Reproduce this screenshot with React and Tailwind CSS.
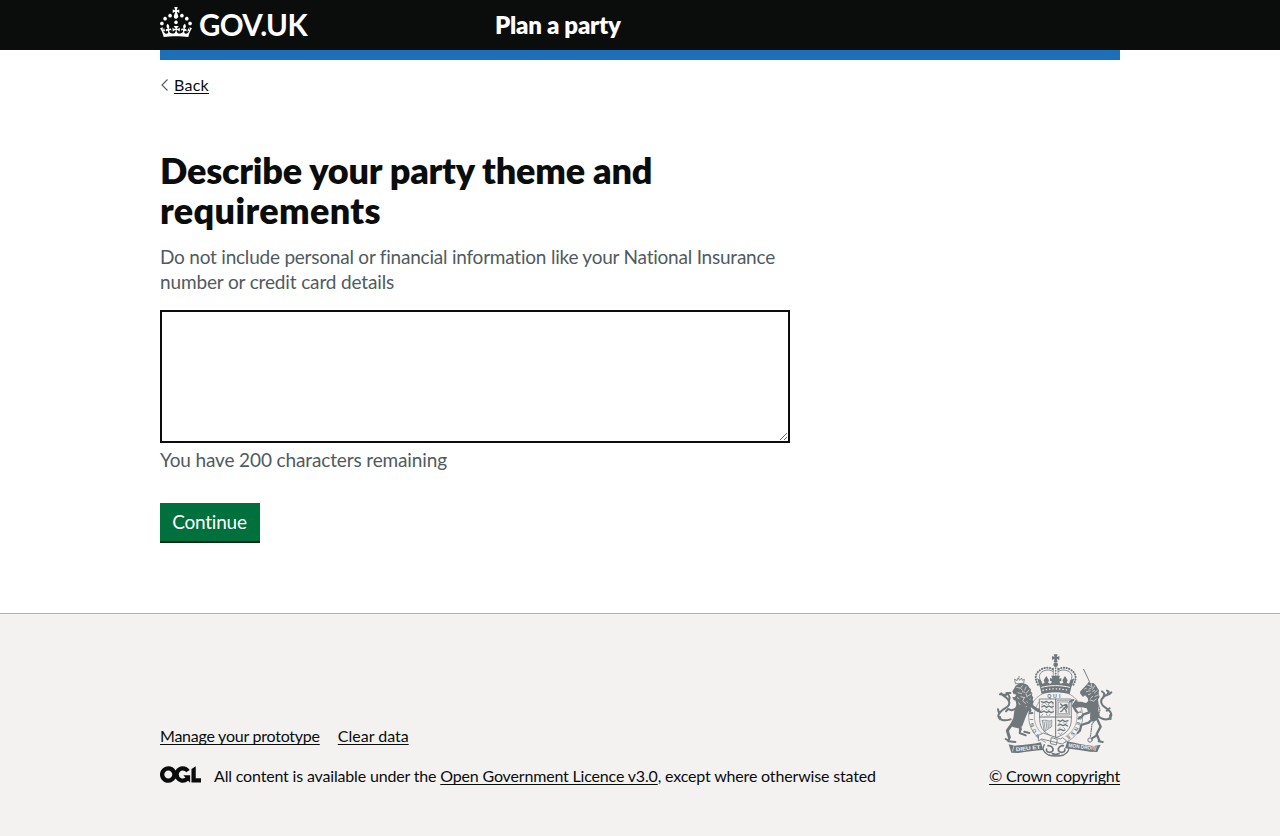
import React from 'react';

function Crown() {
  return (
    <svg className="block h-[30px] w-8 shrink-0" viewBox="0 0 32 30" fill="currentColor" aria-hidden="true">
      <path d="M22.6 10.4c-1 .4-2-.1-2.4-1-.4-.9.1-2 1-2.4.9-.4 2 .1 2.4 1s-.1 2-1 2.4m-5.9 6.7c-.9.4-2-.1-2.4-1-.4-.9.1-2 1-2.4.9-.4 2 .1 2.4 1s-.1 2-1 2.4m10.8-3.7c-1 .4-2-.1-2.4-1-.4-.9.1-2 1-2.4.9-.4 2 .1 2.4 1s0 2-1 2.4m3.3 4.8c-1 .4-2-.1-2.4-1-.4-.9.1-2 1-2.4.9-.4 2 .1 2.4 1s-.1 2-1 2.4M17 4.7l2.3 1.2V2.5l-2.3.7-.2-.2.9-3h-3.4l.9 3-.2.2c-.1.1-2.3-.7-2.3-.7v3.4L15 4.7c.1.1.1.2.2.2l-1.3 4c-.1.2-.1.4-.1.6 0 1.1.8 2 1.9 2.2h.7c1-.2 1.9-1.1 1.9-2.1 0-.2 0-.4-.1-.6l-1.3-4c-.1-.2 0-.2.1-.3m-7.6 5.7c.9.4 2-.1 2.4-1 .4-.9-.1-2-1-2.4-.9-.4-2 .1-2.4 1s0 2 1 2.4m-5 3c.9.4 2-.1 2.4-1 .4-.9-.1-2-1-2.4-.9-.4-2 .1-2.4 1s.1 2 1 2.4m-3.2 4.8c.9.4 2-.1 2.4-1 .4-.9-.1-2-1-2.4-.9-.4-2 .1-2.4 1s0 2 1 2.4m14.8 11c4.4 0 8.6.3 12.3.8 1.1-4.5 2.4-7 3.7-8.8l-2.5-.9c.2 1.3.3 1.9 0 2.7-.4-.4-.8-1.1-1.1-2.3l-1.2 4c.7-.5 1.3-.8 2-.9-1.1 2.5-2.6 3.1-3.5 3-1.1-.2-1.7-1.2-1.5-2.1.3-1.2 1.5-1.5 2.1-.1 1.1-2.3-.8-3-2-2.3 1.9-1.9 2.1-3.5.6-5.6-2.1 1.6-2.1 3.2-1.2 5.5-1.2-1.4-3.2-.6-2.5 1.6.9-1.4 2.1-.5 1.9.8-.2 1.1-1.7 2.1-3.5 1.9-2.7-.2-2.9-2.1-2.9-3.6.7-.1 1.9.5 2.9 1.9l.4-4.3c-1.1 1.1-2.1 1.4-3.2 1.4.4-1.2 2.1-3 2.1-3h-5.4s1.7 1.9 2.1 3c-1.1 0-2.1-.2-3.2-1.4l.4 4.3c1-1.4 2.2-2 2.9-1.9-.1 1.5-.2 3.4-2.9 3.6-1.9.2-3.4-.8-3.5-1.9-.2-1.3 1-2.2 1.9-.8.7-2.3-1.2-3-2.5-1.6.9-2.2.9-3.9-1.2-5.5-1.5 2-1.3 3.7.6 5.6-1.2-.7-3.1 0-2 2.3.6-1.4 1.8-1.1 2.1.1.2.9-.3 1.9-1.5 2.1-.9.2-2.4-.5-3.5-3 .6 0 1.2.3 2 .9l-1.2-4c-.3 1.1-.7 1.9-1.1 2.3-.3-.8-.2-1.4 0-2.7l-2.9.9C1.3 23 2.6 25.5 3.7 30c3.7-.5 7.9-.8 12.3-.8" />
    </svg>
  );
}

function RoyalArms() {
  return (
    <svg className="block h-[103px] w-[116px]" viewBox="51 40 348 309" fill="none" stroke="#6f777b" strokeLinecap="round" strokeLinejoin="round" aria-hidden="true">
      {/* crown */}
      <path fill="#6f777b" stroke="none" d="M221 41h12l-3 8 8-3v12l-8-4 3 10h-12l3-10-8 4V46l8 3z" />
      <circle cx="227" cy="72" r="7" fill="#6f777b" stroke="none" />
      <path strokeWidth="6" strokeDasharray="1 7" d="M174 132c-12-20-8-36 10-46 12-7 26-6 35 0M280 132c12-20 8-36-10-46-12-7-26-6-35 0" />
      <path strokeWidth="2.500" d="M183 122c-9-14-5-25 7-31 11-5 22-4 30 2M271 122c9-14 5-25-7-31-11-5-22-4-30 2" />
      <path strokeWidth="5" strokeDasharray="1 7" d="M227 82v26" />
      <path strokeWidth="2" d="M221 82c-2 12-2 20 0 28M233 82c2 12 2 20 0 28" />
      <path fill="#6f777b" stroke="none" d="M180 140l-9-27 11 5 5 11 7-3-3-7 8-13 8 13-3 7 8 3 4-6-6-3v-8l7 2-3-9h26l-3 9 7-2v8l-6 3 4 6 8-3-3-7 8-13 8 13-3 7 7 3 5-11 11-5-9 27-5 20c-26-7-62-7-84 0z" />
      <path stroke="#f3f2f1" strokeWidth="3" d="M185 140c25-7 59-7 84 0" />
      <path stroke="#f3f2f1" strokeWidth="4" strokeDasharray="1 9" d="M189 149c25-6 51-6 76 0" />
      {/* garter ring */}
      <path strokeWidth="2" d="M186 160c-23 12-40 37-40 67 0 38 22 65 51 78M268 160c23 12 40 37 40 67 0 38-22 65-51 78" />
      <path strokeWidth="1.6" d="M178 183c-10 12-15 26-15 44 0 26 13 47 33 60M276 183c10 12 15 26 15 44 0 26-13 47-33 60M186 160c24-9 58-9 82 0" />
      <g fill="#6f777b" stroke="none" fontFamily="'Liberation Sans', sans-serif" fontWeight="700" fontSize="16">
        <text x="202" y="172">Q</text>
        <text x="219" y="171">U</text>
        <text x="237" y="172">I</text>
      </g>
      <g fill="#6f777b" stroke="none" fontFamily="'Liberation Sans', sans-serif" fontWeight="700" fontSize="15">
        <text transform="translate(181 287) rotate(-133)">H</text>
        <text transform="translate(170 273) rotate(-120)">O</text>
        <text transform="translate(163 257) rotate(-106)">N</text>
        <text transform="translate(160 238) rotate(-96)">I</text>
        <text transform="translate(293 210) rotate(80)">Y</text>
        <text transform="translate(295 227) rotate(94)">P</text>
        <text transform="translate(292 243) rotate(107)">E</text>
        <text transform="translate(287 258) rotate(120)">N</text>
        <text transform="translate(278 272) rotate(133)">S</text>
        <text transform="translate(266 283) rotate(145)">E</text>
      </g>
      {/* shield */}
      <path strokeWidth="2.500" fill="#f3f2f1" d="M179 175h95v62c0 28-17 44-47 54-30-10-48-26-48-54z" />
      <path strokeWidth="3" d="M227 175v116M179 229h95" />
      <path strokeWidth="4" d="M184 183l8 3 7-4 8 5 7-4 6 4M185 199l7-4 8 5 7-4 7 4 6-3M184 215l8-4 8 5 7-4 7 4 6-3M234 239l7 3 7-4 7 5 9-3M234 254l7-3 8 4 7-3 7 4M234 269l8-3 8 4 5-2" />
      <path strokeWidth="2" d="M188 189l-3 4M197 188l3 4M207 190l-3 4M216 188l3 4M188 205l-3 4M198 204l3 4M208 206l-3 4M217 204l3 4M188 221l-3 4M199 221l3 4M210 221l-3 4M239 246l-2 3M249 245l3 3M260 246l-3 4M240 261l-3 3M251 261l3 3M236 278l5 3 5-4" />
      <path strokeWidth="1.8" d="M232 180h37v43h-37zM236 184h29v35h-29z" />
      <path strokeWidth="4" d="M242 190l6 6 7-4 3 6-7 5-4 7-5 3M251 203l6 3 2 8M247 198l-7 4M260 203l2-5-3-7" />
      <path strokeWidth="2" d="M187 240l6 33 22-15V238c-8 8-18-4-28 2zM192 243l4 26M198 242l3 23M204 243l1 19M210 243v17" />
      {/* lion */}
      <g fill="#6f777b" stroke="none">
        <path d="M103 143l4-8 9-5 10-2 9 1 8 4 5 8 5 5-1 6 5 6-1 7 4 5-2 7 3 8-7 12-10 16-8 19-9 24-13 7-16-4-6-10 8-17 3-22 6-18-2-12-6-2-4-8 8-1 4-7-9-3-3-7z" />
      </g>
      <path strokeWidth="2.500" d="M106 128l-2-13 7 5 3-8 5 7 6-7 2 7 6-3-2 11zM117 112v-5" />
      <path stroke="#f3f2f1" strokeWidth="2" d="M110 140l9 2M127 135l-6 8 6 5M138 139l-4 9M147 148l-7 8M114 156l11 3M153 160l-10 6M123 168l10 3M138 159l3 10M127 153l8 2M151 175l-8 5M128 181l9 7M147 193l-9 5M133 170l-3 8M141 183l5 5M116 186l4 6M112 171l5 3" />
      <path strokeWidth="9" d="M146 180l12 18 17 12M99 246l-17 24 6 20M118 246l3 20M144 192l6 18" />
      <path strokeWidth="6" d="M109 203l-14 6-11-4M84 205l-6 7M175 206l6 8M157 217l-8 1M88 292l-3 10 21 2M86 300l-9-5M121 266l-2 11 18 7M133 273l15 4" />
      <path strokeWidth="6" d="M92 236c-20 6-34 3-37-9-1-13 15-21 26-28 11-8 8-19-1-27-6-5-12-8-16-14M78 163l-18-2M87 178c4-8-1-16-8-21l12 0M61 236l-1-7M56 214l-2-8" />
      {/* unicorn */}
      <path strokeWidth="3" strokeDasharray="5 2" d="M311 86l17 36" />
      <g fill="#6f777b" stroke="none">
        <path d="M300 158l1-6 10-11 10-10 5-8 6 4 8 0 7 6 5 8 5 8-1 10 3 9-5 9 2 14-1 16 4 18-7 12-14 6-8-9 1-20-11-11-18-4-13 3-9-5-2-8 10-6 16 0 14 4 7-6-2-9-8-8-6 5z" />
      </g>
      <path stroke="#f3f2f1" strokeWidth="2" d="M314 145l5-2M323 133l9 4M334 129l2 12M344 135l-6 11M352 149l-9 8M355 163l-10 4M319 153l12-3M338 167l-6 6M349 175l-8 6M325 162l7-3M338 152l6-2M330 178l10 3M333 143l-6 2" />
      <path strokeWidth="7" d="M288 182l-9 13 9 16M322 196l6 19-17 6-8 9M342 231l-16 15-22 7-4 16M350 232l12 26-12 22 8 20" />
      <path strokeWidth="6" d="M289 211l4 5M300 230l-5 4M300 270l-7 7M356 302l12 2M350 284l-14 9M280 178l-10 5" />
      <path strokeWidth="6" d="M355 228c20 13 37 10 39-5 1-14-18-20-26-29-8-10-5-18 2-25 7-7 17-5 24-14M370 171l3-12-7-7M382 162l4-9-5-3M392 235l-2-11M380 210l9-7" />
      <path strokeWidth="3.500" strokeDasharray="3 4" d="M356 194l4 14-6 20-18 22-5 40" />
      <circle cx="330" cy="298" r="6.500" strokeWidth="3" />
      {/* garter buckle */}
      <path strokeWidth="2.500" fill="#f3f2f1" d="M176 284l14-7 51 18 7-4 12 10-13 9-62-15-9 5zM215 291l17 5-3 17-17-4z" />
      {/* motto scroll */}
      <path fill="#6f777b" stroke="none" d="M86 311l19 4c28-2 53-4 78-10l7 23c-28 2-50 5-75 9l-21-1zM262 302c29 7 54 12 80 14l20-4-10 22-22-1c-26-4-50-7-75-10z" />
      <path strokeWidth="4" d="M193 312c-7 12-4 22 12 31 12 4 34 4 46 0 16-9 19-19 12-31" />
      <path strokeWidth="5" d="M200 325c-4 8 10 14 18 6 4-10-4-16-14-16M254 325c4 8-10 14-18 6-4-10 4-16 14-16M217 339l10 3 10-3" />
      <path stroke="#f3f2f1" strokeWidth="2" d="M101 318l-3 13M349 318l-4 12" />
      <g fill="#f3f2f1" stroke="none" fontFamily="'Liberation Sans', sans-serif" fontWeight="700" fontSize="16">
        <text transform="translate(108 332) rotate(-6)" textLength="74" lengthAdjust="spacingAndGlyphs">DIEU ET</text>
        <text transform="translate(265 319) rotate(7)" textLength="81" lengthAdjust="spacingAndGlyphs">MON DROIT</text>
      </g>
    </svg>
  );
}

function OglLogo() {
  return (
    <svg className="block h-[17px] w-[41px] shrink-0" viewBox="0 0 483.2 195.7" fill="currentColor" aria-hidden="true">
      <path d="M421.5 142.8V.1l-50.7 32.3v161.1h112.4v-50.7zm-122.3-9.6A47.12 47.12 0 0 1 221 97.8c0-26 21.1-47.1 47.1-47.1 16.7 0 31.4 8.7 39.7 21.8l42.7-27.2A97.63 97.63 0 0 0 268.1 0c-36.5 0-68.3 20.1-85.1 49.7A98 98 0 0 0 97.8 0C43.9 0 0 43.9 0 97.8s43.9 97.8 97.8 97.8c36.5 0 68.3-20.1 85.1-49.7a97.76 97.76 0 0 0 149.6 25.4l19.4 22.2h3v-87.8h-80l24.3 27.5zM97.8 145c-26 0-47.1-21.1-47.1-47.1s21.1-47.1 47.1-47.1 47.1 21.1 47.1 47.1S123.8 145 97.8 145" />
    </svg>
  );
}

const link = 'underline decoration-1 underline-offset-[2px] [text-decoration-skip-ink:none]';

export default function App() {
  return (
    <div className="flex min-h-[836px] flex-col bg-white font-[Lato,'Liberation_Sans',sans-serif] text-[#0b0c0c]">
      <header className="bg-[#0b0c0c] text-white">
        <div className="mx-auto flex h-[50px] w-[960px]">
          <a href="#" className="flex w-[335px] items-start gap-[7px] pt-[7px]">
            <Crown />
            <span className="mt-[3px] text-[29.5px] leading-[30px] font-bold tracking-[-0.6px]">GOV.UK</span>
          </a>
          <a href="#" className="pt-[10px] text-[24px] leading-[30px] font-extrabold tracking-[-0.25px]">Plan a party</a>
        </div>
      </header>
      <div className="mx-auto h-[10px] w-[960px] bg-[#1d70b8]" />

      <div className="mx-auto w-[960px] grow">
        <a href="#" className="mt-[15px] flex w-fit items-center text-[16px] leading-5 tracking-[0.27px]">
          <svg className="mr-[5px] h-3 w-[9px]" viewBox="0 0 9 12" fill="none" stroke="#505a5f" strokeWidth="1.1" aria-hidden="true">
            <path d="M7.5 .5L2 6l5.500 5.500" />
          </svg>
          <span className={link}>Back</span>
        </a>

        <main className="w-[630px] pt-[55px]">
          <h1 className="text-[36px] leading-10 font-extrabold tracking-[-0.2px]">
            <label htmlFor="theme">
              Describe your party theme and <span className="tracking-[0.35px]">requirements</span>
            </label>
          </h1>
          <p className="mt-[14px] text-[19px] leading-[25px] tracking-[-0.22px] text-[#505a5f]">
            Do not include personal or financial information like your National Insurance
            <br />
            <span className="tracking-[-0.14px]">number or credit card details</span>
          </p>
          <textarea id="theme" rows={5} className="mt-[16px] block h-[133px] w-full resize-y border-2 border-[#0b0c0c] p-[5px] text-[19px] leading-[25px]" />
          <p className="mt-[4px] text-[19px] leading-[25px] tracking-[-0.13px] text-[#505a5f]">You have 200 characters remaining</p>
          <button className="mt-[31px] block h-[38px] w-[100px] bg-[#00703c] pr-px pb-[2px] text-center text-[19px] leading-[19px] tracking-[-0.21px] text-white shadow-[0_2px_0_#002d18]">
            Continue
          </button>
        </main>
      </div>

      <footer className="h-[223px] border-t border-[#b1b4b6] bg-[#f3f2f1] pt-[39px]">
        <div className="mx-auto flex h-[133px] w-[960px] items-end justify-between text-[16px] leading-5">
          <div className="flex flex-col gap-5">
            <div className="flex gap-[18px]">
              <a href="#" className={`${link} tracking-[-0.24px]`}>Manage your prototype</a>
              <a href="#" className={`${link} tracking-[0px]`}>Clear data</a>
            </div>
            <div className="flex items-start">
              <OglLogo />
              <p className="ml-[13px] tracking-[-0.17px]">
                All content is available under the <a href="#" className={link}>Open Government Licence v3.0</a>, except where otherwise stated
              </p>
            </div>
          </div>
          <a href="#" className="flex flex-col items-end gap-[9px] tracking-[-0.19px]">
            <span className="mr-[7px]"><RoyalArms /></span>
            <span className={link}>© Crown copyright</span>
          </a>
        </div>
      </footer>
    </div>
  );
}
